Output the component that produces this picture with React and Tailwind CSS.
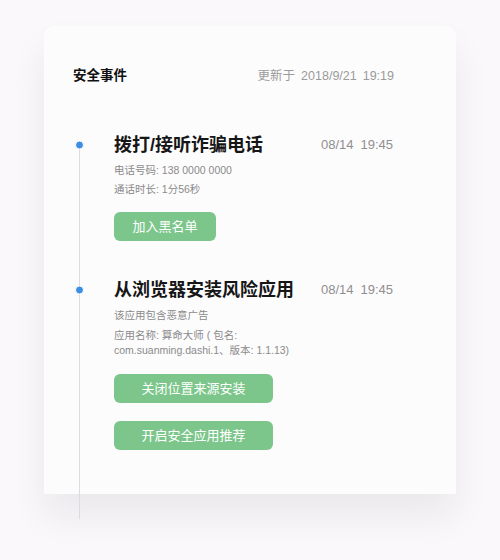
const font = { fontFamily: '"Liberation Sans", "Noto Sans CJK SC", sans-serif' };

function ActionButton({ label, width }) {
  return (
    <button
      className={`block h-[29px] rounded-[6px] bg-[#7cc68b] text-center text-[13px] text-white ${width}`}
    >
      {label}
    </button>
  );
}

function EventTitle({ title, time }) {
  return (
    <div className="relative flex h-[26px] items-center">
      <span className="absolute left-[-39.5px] top-1/2 h-[9px] w-[9px] -translate-y-1/2 rounded-full border border-white bg-[#3b8ee0]" />
      <h3 className="w-[207px] text-[18px] font-bold leading-[26px] text-[#161616]">{title}</h3>
      <span className="flex gap-[7px] text-[13px] text-[#8f8f8f]">
        <span>{time.split(' ')[0]}</span>
        <span>{time.split(' ')[1]}</span>
      </span>
    </div>
  );
}

export default function App() {
  return (
    <div className="min-h-[560px] bg-[#faf8fa] pt-[26px]" style={font}>
      <div className="relative ml-[44px] w-[412px] rounded-t-[10px] bg-[#fdfcfd] pb-[44px] pl-[29px] pr-[62px] pt-[40px] shadow-[0_22px_36px_rgba(40,30,50,0.07)]">
        <div className="flex h-5 items-center justify-between">
          <h2 className="text-[13.5px] font-bold text-[#111]">安全事件</h2>
          <p className="flex gap-[6px] text-[12.5px] text-[#9a9a9a]">
            <span>更新于</span>
            <span>2018/9/21</span>
            <span>19:19</span>
          </p>
        </div>

        <div className="relative mt-[46px] pl-[41px]">
          <span className="absolute bottom-[-69px] left-[6px] top-[13px] w-px bg-[#dcdbe0]" />

          <section>
            <EventTitle title="拨打/接听诈骗电话" time="08/14 19:45" />
            <div className="mt-[3px] text-[10.5px] leading-[19px] text-[#8a8a8a]">
              <p>电话号码: 138 0000 0000</p>
              <p>通话时长: 1分56秒</p>
            </div>
            <div className="mt-[13px]">
              <ActionButton label="加入黑名单" width="w-[102px]" />
            </div>
          </section>

          <section className="mt-[36px]">
            <EventTitle title="从浏览器安装风险应用" time="08/14 19:45" />
            <div className="text-[10.5px] leading-[15px] text-[#8a8a8a]">
              <p className="mt-[5px]">该应用包含恶意广告</p>
              <p className="mt-[5px] w-[200px]">应用名称: 算命大师 ( 包名: com.suanming.dashi.1、版本: 1.1.13)</p>
            </div>
            <div className="mt-[16px] flex flex-col gap-[18px]">
              <ActionButton label="关闭位置来源安装" width="w-[159px]" />
              <ActionButton label="开启安全应用推荐" width="w-[159px]" />
            </div>
          </section>
        </div>
      </div>
    </div>
  );
}
